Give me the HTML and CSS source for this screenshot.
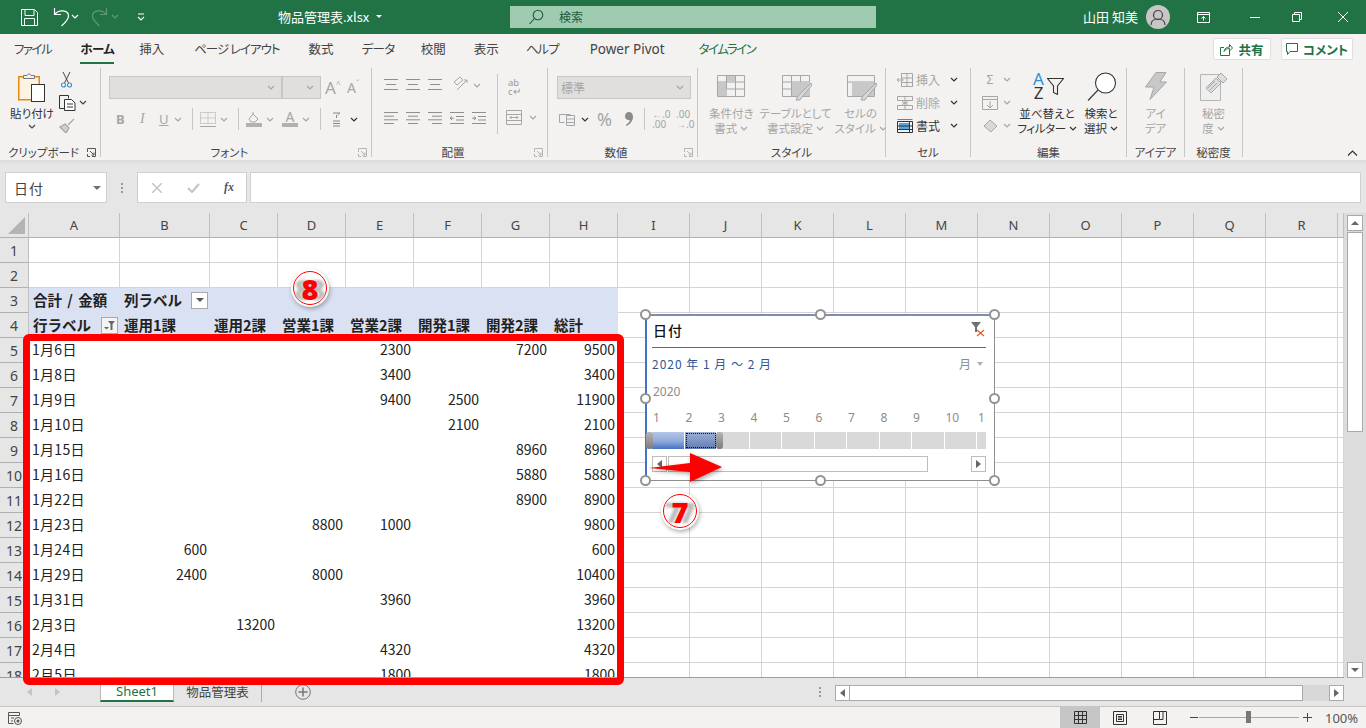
FILE: index.html
```html
<!DOCTYPE html>
<html lang="ja">
<head>
<meta charset="utf-8">
<title>物品管理表.xlsx - Excel</title>
<link rel="stylesheet" href="styles.css">
</head>
<body>
<svg class="defs" width="0" height="0" aria-hidden="true">
  <symbol id="cv" viewBox="0 0 8 5"><path d="M1 1l3 3 3-3" fill="none" stroke="currentColor" stroke-width="1.2"/></symbol>
  <symbol id="launch" viewBox="0 0 9 9"><path d="M.5 4V.5h8v8H5M3 3l4 4M7 4.5V7H4.5M.5 6v2.500H3" fill="none" stroke="currentColor"/></symbol>
</svg>

<header class="titlebar">
  <div class="qat">
    <svg class="q-save" width="17" height="17" viewBox="0 0 17 17"><path d="M.5.5h13l3 3v13H.5zM4 .5v6h9v-6M3.500 16.500v-7h10v7" fill="none" stroke="#fff"/></svg>
    <svg class="q-undo" width="19" height="20" viewBox="0 0 19 20"><path d="M3.500 1v6.500H10M3.500 7.500C8 2 17 3 17.500 8.500c.3 4-3 7-7 10.500" fill="none" stroke="#fff" stroke-width="1.200"/></svg>
    <svg class="q-cv" width="8" height="5"><use href="#cv"/></svg>
    <svg class="q-redo" width="19" height="20" viewBox="0 0 19 20"><path d="M15.500 1v6.500H9M15.500 7.500C11 2 2 3 1.500 8.500c-.3 4 3 7 7 10.500" fill="none" stroke="#5f9a7b" stroke-width="1.200"/></svg>
    <svg class="q-cv dim" width="8" height="5"><use href="#cv"/></svg>
    <svg class="q-more" width="8" height="8" viewBox="0 0 8 8"><path d="M1 1h6M1 4l3 3 3-3" fill="none" stroke="#fff" stroke-width="1.200"/></svg>
  </div>
  <div class="docname">物品管理表.xlsx<span class="caret-w"></span></div>
  <div class="search">
    <svg width="15" height="16" viewBox="0 0 15 16"><circle cx="9" cy="6" r="4.800" fill="none" stroke="#1f5a3a" stroke-width="1.100"/><path d="M5.500 9.500L.5 15" stroke="#1f5a3a" stroke-width="1.100"/></svg>
    <span>検索</span>
  </div>
  <div class="user">山田 知美</div>
  <div class="avatar"><svg width="16" height="17" viewBox="0 0 16 17"><circle cx="8" cy="6" r="4.500" fill="none" stroke="#444" stroke-width="1.200"/><path d="M1 16c0-4 3-6 7-6s7 2 7 6" fill="none" stroke="#444" stroke-width="1.200"/></svg></div>
  <div class="winbtns">
    <svg width="13" height="11" viewBox="0 0 13 11"><path d="M.5.500h12v10H.5zM.5 2.500h12M6.500 8.500V4.500M4.500 6.500l2-2 2 2" fill="none" stroke="#fff"/></svg>
    <svg width="10" height="1" viewBox="0 0 10 1"><path d="M0 .5h10" stroke="#fff"/></svg>
    <svg width="10" height="10" viewBox="0 0 10 10"><path d="M.5 2.500h7v7h-7zM2.500 2.500v-2h7v7h-2" fill="none" stroke="#fff"/></svg>
    <svg width="10" height="10" viewBox="0 0 10 10"><path d="M0 0l10 10M10 0L0 10" stroke="#fff"/></svg>
  </div>
</header>

<nav class="tabs">
  <span class="tab t-file">ファイル</span>
  <span class="tab t-home">ホーム</span>
  <span class="tab t-ins">挿入</span>
  <span class="tab t-page">ページ レイアウト</span>
  <span class="tab t-num">数式</span>
  <span class="tab t-data">データ</span>
  <span class="tab t-rev">校閲</span>
  <span class="tab t-view">表示</span>
  <span class="tab t-help">ヘルプ</span>
  <span class="tab t-pp">Power Pivot</span>
  <span class="tab t-tl">タイムライン</span>
  <span class="tab-space"></span>
  <button class="pill p-share"><svg width="13" height="13" viewBox="0 0 13 13"><path d="M9.500 8v4.500H.5v-8H4M4 8.500c.5-3 2.500-4.500 5.500-4.500V1.500l3 3.500-3 3V5.500C7 5.500 5 6.500 4 8.500z" fill="none" stroke="#217346"/></svg>共有</button>
  <button class="pill p-comment"><svg width="12" height="12" viewBox="0 0 12 12"><path d="M.5.5h11v8H4l-2.500 3v-3h-1z" fill="none" stroke="#217346"/></svg>コメント</button>
</nav>

<section class="ribbon">
  <div class="group g-clip">
    <div class="g-body">
      <div class="big b-paste">
        <div class="big-ic"><svg width="28" height="31" viewBox="0 0 28 31"><rect x=".75" y="4.750" width="20.500" height="23" fill="#fdf3e3" stroke="#e48a12" stroke-width="1.500"/><path d="M5.500 6.500h11V3.500h-3.500c-.3-2-3.700-2-4 0H5.500z" fill="#f3f2f1" stroke="#777"/><rect x="13.500" y="12.500" width="13" height="17" fill="#fff" stroke="#333"/></svg></div>
        <span>貼り付け</span>
        <svg class="cv-l" width="8" height="5"><use href="#cv"/></svg>
      </div>
      <div class="smallcol sc-clip">
        <div class="sm"><svg width="11" height="16" viewBox="0 0 11 16"><path d="M2 0l5.500 11M9 0L3.500 11" stroke="#444"/><circle cx="2.500" cy="13" r="2" fill="#fff" stroke="#2f8fd8" stroke-width="1.200"/><circle cx="8.500" cy="13" r="2" fill="#fff" stroke="#2f8fd8" stroke-width="1.200"/></svg></div>
        <div class="sm"><svg width="17" height="16" viewBox="0 0 17 16"><path d="M5.500 13.500H.5V.5h9v3" fill="none" stroke="#333"/><path d="M5.500 4.500h7l3.500 3.500v7.500H5.500zM8 9h6M8 12h6" fill="#fff" stroke="#333"/></svg><svg class="cv-g" width="8" height="5"><use href="#cv"/></svg></div>
        <div class="sm"><svg width="16" height="15" viewBox="0 0 16 15"><path d="M15 1L9 7M1 9l5-3 4 4-3 5-6-6z" fill="#d0d0d0" stroke="#a6a6a6" stroke-width="1.200"/></svg></div>
      </div>
    </div>
    <div class="g-label"><span>クリップボード</span><svg class="launch" width="9" height="9"><use href="#launch"/></svg></div>
  </div>
  <i class="gsep"></i>

  <div class="group g-font">
    <div class="g-body col">
      <div class="f-row1">
        <div class="combo c-fname"><svg width="8" height="5"><use href="#cv"/></svg></div>
        <div class="combo c-fsize"><svg width="8" height="5"><use href="#cv"/></svg></div>
        <span class="grow-a big-a">A<sup>^</sup></span>
        <span class="grow-a small-a">A<sup>ˇ</sup></span>
      </div>
      <div class="f-row2">
        <b class="t-b">B</b><i class="t-i">I</i><u class="t-u">U</u><svg class="d" width="8" height="5"><use href="#cv"/></svg>
        <i class="vl"></i>
        <svg width="16" height="15" viewBox="0 0 16 15"><path d="M.5.5h15v11H.5zM8 .5v11M.5 6h15" fill="none" stroke="#a6a6a6" stroke-dasharray="1 1"/><path d="M0 14.500h16" stroke="#a6a6a6"/></svg><svg class="d" width="8" height="5"><use href="#cv"/></svg>
        <i class="vl"></i>
        <svg width="16" height="16" viewBox="0 0 16 16"><path d="M3 8l4-5 5 5-3 3H5zM7 3V1" fill="none" stroke="#a6a6a6"/><path d="M0 12h16v4H0z" fill="#b3b0ad"/></svg><svg class="d" width="8" height="5"><use href="#cv"/></svg>
        <span class="colorA">A</span><svg class="d" width="8" height="5"><use href="#cv"/></svg>
        <i class="vl"></i>
        <svg class="ruby" width="9" height="15" viewBox="0 0 9 15"><path d="M1 1h7L5.500 3M4.500 3v3M1 9h7M1 11.500h7M1 14h7" fill="none" stroke="#888"/></svg><svg class="d dark" width="8" height="5"><use href="#cv"/></svg>
      </div>
    </div>
    <div class="g-label"><span>フォント</span><svg class="launch dim" width="9" height="9"><use href="#launch"/></svg></div>
  </div>
  <i class="gsep"></i>

  <div class="group g-align">
    <div class="g-body">
      <div class="a-main">
        <div class="a-row r1">
          <svg width="14" height="12" viewBox="0 0 14 12"><path d="M0 .5h14M2 5.500h10M0 10.500h14" stroke="#8f8f8f"/></svg>
          <svg width="14" height="12" viewBox="0 0 14 12"><path d="M0 .5h14M2 5.500h10M0 10.500h14" stroke="#8f8f8f"/></svg>
          <svg width="14" height="12" viewBox="0 0 14 12"><path d="M0 .5h14M2 5.500h10M0 10.500h14" stroke="#8f8f8f"/></svg>
          <svg width="17" height="16" viewBox="0 0 17 16"><path d="M2 6l6-5 3 3-6 5zM5 14L15 4M15 4h-3M15 4v3" fill="none" stroke="#a6a6a6"/></svg><svg class="d" width="8" height="5"><use href="#cv"/></svg>
        </div>
        <div class="a-row r2">
          <svg width="14" height="12" viewBox="0 0 14 12"><path d="M0 .5h14M0 4.200h10M0 7.800h14M0 11.500h10" stroke="#8f8f8f"/></svg>
          <svg width="14" height="12" viewBox="0 0 14 12"><path d="M0 .5h14M2 4.200h10M0 7.800h14M2 11.500h10" stroke="#8f8f8f"/></svg>
          <svg width="14" height="12" viewBox="0 0 14 12"><path d="M0 .5h14M4 4.200h10M0 7.800h14M4 11.500h10" stroke="#8f8f8f"/></svg>
          <svg width="14" height="12" viewBox="0 0 14 12"><path d="M0 .5h14M0 11.500h14M6 4.500h8M6 8h8M4 6.200H0M2 4.500L0 6.200 2 8" fill="none" stroke="#8f8f8f"/></svg>
          <svg width="14" height="12" viewBox="0 0 14 12"><path d="M0 .5h14M0 11.500h14M6 4.500h8M6 8h8M0 6.200h4M2 4.500l2 1.700L2 8" fill="none" stroke="#8f8f8f"/></svg>
        </div>
      </div>
      <i class="vl tall"></i>
      <div class="a-side">
        <div class="wrap-ic">ab<br>c↵</div>
        <div class="merge"><svg width="16" height="15" viewBox="0 0 16 15"><path d="M.5.5h15v14H.5zM.5 4.500h15M.5 10.500h15M4 7.500h8M5.500 6L4 7.500 5.500 9M10.500 6L12 7.500 10.500 9" fill="none" stroke="#a6a6a6"/></svg><svg class="d" width="8" height="5"><use href="#cv"/></svg></div>
      </div>
    </div>
    <div class="g-label"><span>配置</span><svg class="launch dim" width="9" height="9"><use href="#launch"/></svg></div>
  </div>
  <i class="gsep"></i>

  <div class="group g-num">
    <div class="g-body col">
      <div class="combo c-num"><span>標準</span><svg width="8" height="5"><use href="#cv"/></svg></div>
      <div class="n-row">
        <svg class="n-cur" width="17" height="14" viewBox="0 0 17 14"><path d="M11.500 2.500H.5v8h5M7.500 3.500h8v10h-8zM7.500 7h8M7.500 10.500h8" fill="none" stroke="#a6a6a6"/></svg><svg class="d dark" width="8" height="5"><use href="#cv"/></svg>
        <span class="pct">%</span>
        <svg class="comma" width="8" height="14" viewBox="0 0 8 14"><path d="M3.800 0C6.300 0 8 1.800 8 4.500 8 8.500 5.500 12 1.500 14l-.7-1C3 11.500 4.500 10 4.800 8 2 8.500 0 6.800 0 4.300 0 1.800 1.700 0 3.800 0z" fill="#8a8a8a"/></svg>
        <i class="vl"></i>
        <span class="dec">←.0<br>.00</span>
        <span class="dec d2">.00<br>→.0</span>
      </div>
    </div>
    <div class="g-label"><span>数値</span><svg class="launch dim" width="9" height="9"><use href="#launch"/></svg></div>
  </div>
  <i class="gsep"></i>

  <div class="group g-style">
    <div class="g-body">
      <div class="big dis b-cond">
        <div class="big-ic"><svg width="28" height="22" viewBox="0 0 28 22"><path d="M.5.5h27v21H.5zM.5 7h27M.5 14h27M9.500.5v21M18.500.5v21" fill="none" stroke="#a6a6a6"/><path d="M10 1h8v6h-8zM1 7h8v7H1zM18 14h-8v7H1v-7h8" fill="#c8c8c8"/></svg></div>
        <span>条件付き</span><span>書式<svg class="cv-i" width="8" height="5"><use href="#cv"/></svg></span>
      </div>
      <div class="big dis b-tbl">
        <div class="big-ic"><svg width="30" height="26" viewBox="0 0 30 26"><path d="M.5.500h27v21H.5zM.5 7h27M.5 14h27M9.500.5v21M18.500.5v21" fill="none" stroke="#a6a6a6"/><path d="M10 7h18v14H10z" fill="#c8c8c8"/><path d="M29 8L16 21l-2 4h4l2-3L30 10z" fill="#d8d8d8" stroke="#a6a6a6"/></svg></div>
        <span>テーブルとして</span><span>書式設定<svg class="cv-i" width="8" height="5"><use href="#cv"/></svg></span>
      </div>
      <div class="big dis b-cell">
        <div class="big-ic"><svg width="30" height="26" viewBox="0 0 30 26"><path d="M.5.500h27v21H.5zM.5 7h27" fill="none" stroke="#a6a6a6"/><path d="M5 7h22v14H5z" fill="#c8c8c8"/><path d="M29 8L16 21l-2 4h4l2-3L30 10z" fill="#d8d8d8" stroke="#a6a6a6"/></svg></div>
        <span>セルの</span><span>スタイル<svg class="cv-i" width="8" height="5"><use href="#cv"/></svg></span>
      </div>
    </div>
    <div class="g-label plain"><span>スタイル</span></div>
  </div>
  <i class="gsep"></i>

  <div class="group g-cell">
    <div class="g-body">
      <div class="smallcol sc-cell">
        <div class="sm dis"><svg width="16" height="14" viewBox="0 0 16 14"><path d="M4.500.5h11v13h-11zM4.500 5h11M4.500 9.500h11M10 .5v13M0 7h7M2 5L0 7l2 2" fill="none" stroke="#a6a6a6"/></svg><span>挿入</span><svg class="cv-d" width="8" height="5"><use href="#cv"/></svg></div>
        <div class="sm dis"><svg width="16" height="14" viewBox="0 0 16 14"><path d="M.5.5h15v4H.5zM.5 9.500h15v4H.5zM8 .5v13M5 5.500l6 3M11 5.500l-6 3" fill="none" stroke="#a6a6a6"/></svg><span>削除</span><svg class="cv-d" width="8" height="5"><use href="#cv"/></svg></div>
        <div class="sm on"><svg width="16" height="15" viewBox="0 0 16 15"><path d="M.5 1.500h15" stroke="#2f8fd8"/><path d="M2 5h10v7H2z" fill="#55a6e4"/><path d="M.5 3.500h15v11H.5zM.5 8h15M.5 11.500h15M12.500 3.500v11" fill="none" stroke="#333"/></svg><span>書式</span><svg class="cv-e" width="8" height="5"><use href="#cv"/></svg></div>
      </div>
    </div>
    <div class="g-label plain"><span>セル</span></div>
  </div>
  <i class="gsep"></i>

  <div class="group g-edit">
    <div class="g-body">
      <div class="smallcol sc-edit">
        <div class="sm dis"><span class="sigma">Σ</span><svg class="cv-d" width="8" height="5"><use href="#cv"/></svg></div>
        <div class="sm dis"><svg width="16" height="14" viewBox="0 0 16 14"><path d="M.5.500h15v13H.5zM.5 3.500h15M8 5v7M5 9l3 3 3-3" fill="none" stroke="#a6a6a6"/></svg><svg class="cv-d" width="8" height="5"><use href="#cv"/></svg></div>
        <div class="sm dis"><svg width="16" height="14" viewBox="0 0 16 14"><path d="M8 1l7 6-6 6-7-6z" fill="#d8d8d8" stroke="#a6a6a6"/></svg><svg class="cv-d" width="8" height="5"><use href="#cv"/></svg></div>
      </div>
      <div class="big b-sort">
        <div class="big-ic sort-ic"><div class="az"><span class="a-blue">A</span><span>Z</span></div><svg width="17" height="17" viewBox="0 0 17 17"><path d="M.5.500h16L10.500 8v8.500l-4-2V8z" fill="none" stroke="#333" stroke-width="1.100"/></svg></div>
        <span>並べ替えと</span><span class="tight">フィルター<svg class="cv-i" width="8" height="5"><use href="#cv"/></svg></span>
      </div>
      <div class="big b-find">
        <div class="big-ic"><svg width="30" height="29" viewBox="0 0 30 29"><circle cx="18.500" cy="11" r="10" fill="#fff" stroke="#333" stroke-width="1.100"/><path d="M11 18L1 28.500" stroke="#333" stroke-width="1.100"/></svg></div>
        <span>検索と</span><span>選択<svg class="cv-i" width="8" height="5"><use href="#cv"/></svg></span>
      </div>
    </div>
    <div class="g-label plain"><span>編集</span></div>
  </div>
  <i class="gsep"></i>

  <div class="group g-idea">
    <div class="g-body">
      <div class="big dis b-idea">
        <div class="big-ic"><svg width="22" height="28" viewBox="0 0 22 28"><path d="M11 .5h10L15 10h6.500L5 27.500 9 15H.5z" fill="#c8c8c8" stroke="#a6a6a6"/></svg></div>
        <span>アイ</span><span>デア</span>
      </div>
    </div>
    <div class="g-label plain"><span>アイデア</span></div>
  </div>
  <i class="gsep"></i>

  <div class="group g-sens">
    <div class="g-body">
      <div class="big dis b-sens">
        <div class="big-ic"><svg width="28" height="29" viewBox="0 0 28 29"><path d="M.5 2.500h20v26H.5z" fill="#efefef" stroke="#b5b5b5"/><path d="M6 16l10-10 5 5-10 10zM8 16l7-7M10 18l7-7M17 5l4-4 6 6-4 4z" fill="#ddd" stroke="#a6a6a6"/></svg></div>
        <span>秘密</span><span>度<svg class="cv-i" width="8" height="5"><use href="#cv"/></svg></span>
      </div>
    </div>
    <div class="g-label plain"><span>秘密度</span></div>
  </div>
  <i class="gsep"></i>
  <div class="collapse"><svg width="11" height="6" viewBox="0 0 11 6"><path d="M1 5.500l4.500-4.500 4.500 4.500" fill="none" stroke="#333" stroke-width="1.200"/></svg></div>
</section>
<div class="ribbon-shadow"></div>

<section class="formula">
  <div class="namebox"><span>日付</span><i class="tri-d"></i></div>
  <div class="fdots"></div>
  <div class="fbtns">
    <svg width="10" height="10" viewBox="0 0 10 10"><path d="M0 0l10 10M10 0L0 10" stroke="#c4c4c4" stroke-width="1.500"/></svg>
    <svg width="13" height="10" viewBox="0 0 13 10"><path d="M1 5l4 4 7-8" fill="none" stroke="#c4c4c4" stroke-width="2"/></svg>
    <span class="fx">fx</span>
  </div>
  <div class="finput"></div>
</section>

<main class="sheet-area">
  <div class="grid-wrap">
    <table class="sheet">
      <colgroup>
        <col class="c-rh"><col class="c-a"><col class="c-b">
        <col class="c-n"><col class="c-n"><col class="c-n"><col class="c-n"><col class="c-n"><col class="c-n">
        <col class="c-w"><col class="c-w"><col class="c-w"><col class="c-w"><col class="c-w"><col class="c-w"><col class="c-w"><col class="c-w"><col class="c-w"><col class="c-w"><col class="c-x">
      </colgroup>
      <thead>
        <tr><th class="corner"><i></i></th><th>A</th><th>B</th><th>C</th><th>D</th><th>E</th><th>F</th><th>G</th><th>H</th><th>I</th><th>J</th><th>K</th><th>L</th><th>M</th><th>N</th><th>O</th><th>P</th><th>Q</th><th>R</th><th></th></tr>
      </thead>
      <tbody id="rows"></tbody>
    </table>
  </div>
  <aside class="vscroll">
    <div class="sb-btn"><i class="tri-u"></i></div>
    <div class="v-thumb"></div>
    <div class="v-track"></div>
    <div class="sb-btn"><i class="tri-d2"></i></div>
  </aside>
</main>

<section class="sheetbar">
  <div class="nav-arrows"><i class="na-l"></i><i class="na-r"></i></div>
  <div class="stab active">Sheet1</div>
  <div class="stab">物品管理表</div>
  <div class="addsheet"><svg width="16" height="16" viewBox="0 0 16 16"><circle cx="8" cy="8" r="7.300" fill="none" stroke="#777"/><path d="M8 3.500v9M3.500 8h9" stroke="#777" stroke-width="1.500"/></svg></div>
  <div class="hdots"></div>
  <div class="hscroll">
    <div class="hb"><i class="na-l dark"></i></div>
    <div class="h-thumb"></div>
    <div class="h-track"></div>
    <div class="hb"><i class="na-r dark"></i></div>
  </div>
</section>

<footer class="status">
  <svg class="macro" width="14" height="14" viewBox="0 0 14 14"><path d="M.5 1.500h11v3H.5zM.5 4.500v8h5M3 7h3M3 10h2" fill="none" stroke="#555"/><circle cx="10" cy="10" r="3.500" fill="none" stroke="#555"/><circle cx="10" cy="10" r="1.500" fill="#555"/></svg>
  <div class="viewbtn active"><svg width="13" height="13" viewBox="0 0 13 13"><path d="M.5.500h12v12H.5zM4.500.5v12M8.500.5v12M.5 4.500h12M.5 8.500h12" fill="none" stroke="#333"/></svg></div>
  <div class="viewbtn"><svg width="14" height="14" viewBox="0 0 14 14"><path d="M.5.500h13v13H.5zM3.500 3.500h7v7h-7zM5 5.500h4M5 7h4M5 8.500h4" fill="none" stroke="#333"/></svg></div>
  <div class="viewbtn"><svg width="14" height="14" viewBox="0 0 14 14"><path d="M.5.500h13v13H.5zM.5 8.500h6V.5M7 8.500h3V.5" fill="none" stroke="#333"/></svg></div>
  <div class="zoom-minus"></div>
  <div class="zoom-track"><i></i></div>
  <div class="zoom-plus"></div>
  <div class="zoom-val">100%</div>
</footer>

<div class="slicer">
  <i class="h h1"></i><i class="h h2"></i><i class="h h3"></i><i class="h h4"></i><i class="h h5"></i><i class="h h6"></i><i class="h h7"></i><i class="h h8"></i>
  <div class="sl-head"><span>日付</span>
    <svg width="15" height="15" viewBox="0 0 15 15"><path d="M0 0h10L6 5v5H4V5z" fill="#707070"/><path d="M6 8l7 6M13 8l-7 6" stroke="#e8572f" stroke-width="1.200"/></svg>
  </div>
  <div class="sl-range"><span class="sl-rtext">2020 年 1 月 ～ 2 月</span><span class="sl-unit">月<i class="tri-s"></i></span></div>
  <div class="sl-year">2020</div>
  <div class="sl-months" id="months"></div>
  <div class="sl-bar" id="bar"></div>
  <div class="sl-scroll">
    <div class="sl-b"><i class="na-l dark"></i></div>
    <div class="sl-thumb"></div>
    <div class="sl-gap"></div>
    <div class="sl-b"><i class="na-r dark"></i></div>
  </div>
</div>

<div class="redbox"></div>
<svg class="arrow" width="82" height="38" viewBox="0 0 82 38"><path d="M1 16l41-5V1l32 14L42 30V20z" fill="#f00"/></svg>
<div class="badge b8"><span>8</span></div>
<div class="badge b7"><span>7</span></div>
<script src="app.js"></script>
</body>
</html>
```
FILE: app.js
```js
var cols = 19;
var data = [
  ['1月6日',{5:2300,7:7200,8:9500}],
  ['1月8日',{5:3400,8:3400}],
  ['1月9日',{5:9400,6:2500,8:11900}],
  ['1月10日',{6:2100,8:2100}],
  ['1月15日',{7:8960,8:8960}],
  ['1月16日',{7:5880,8:5880}],
  ['1月22日',{7:8900,8:8900}],
  ['1月23日',{4:8800,5:1000,8:9800}],
  ['1月24日',{2:600,8:600}],
  ['1月29日',{2:2400,4:8000,8:10400}],
  ['1月31日',{5:3960,8:3960}],
  ['2月3日',{3:13200,8:13200}],
  ['2月4日',{5:4320,8:4320}],
  ['2月5日',{5:1800,8:1800}]
];
var heads = {2:'運用1課',3:'運用2課',4:'営業1課',5:'営業2課',6:'開発1課',7:'開発2課',8:'総計'};
var fbtn = '<i class="pv-btn"><b class="pv-tri"></b></i>';
var funnel = '<i class="pv-btn flt"><svg width="11" height="9" viewBox="0 0 11 9"><path d="M4 0h7L8.500 3v6h-2V3z" fill="#666"/><path d="M0 6h5L2.500 8.500z" fill="#666"/></svg></i>';
var h = '';
function rest(from){ var s=''; for(var c=from;c<=cols;c++){ s+='<td></td>'; } return s; }
for (var r=1;r<=24;r++){
  h += '<tr><th class="rh">'+(r<=23?r:'')+'</th>';
  if (r===3){
    h += '<td class="pvh"><div class="pv wide">合計 / 金額</div></td><td class="pvh"><div class="pv sb">列ラベル'+fbtn+'</div></td>';
    for(var c=3;c<=8;c++){ h+='<td class="pvh"></td>'; }
    h += rest(9);
  } else if (r===4){
    h += '<td class="pvh"><div class="pv sb">行ラベル'+funnel+'</div></td>';
    for(var d=2;d<=8;d++){ h+='<td class="pvh"><div class="pv">'+heads[d]+'</div></td>'; }
    h += rest(9);
  } else if (r>=5 && r<=18){
    var row = data[r-5];
    h += '<td class="dl">'+row[0]+'</td>';
    for(var e=2;e<=8;e++){ h+='<td class="dn">'+(row[1][e]||'')+'</td>'; }
    h += rest(9);
  } else {
    h += rest(1);
  }
  h += '</tr>';
}
document.getElementById('rows').innerHTML = h;

var ml = ['1','2','3','4','5','6','7','8','9','10','1'], mh='', bh='';
for (var i=0;i<ml.length;i++){
  mh += '<span>'+ml[i]+'</span>';
  bh += '<i class="'+(i===0?'s1':i===1?'s2':'')+'"></i>';
}
document.getElementById('months').innerHTML = mh;
document.getElementById('bar').innerHTML = bh;
```
FILE: styles.css
```css
* { box-sizing: border-box; }
html, body { margin: 0; padding: 0; }
body {
  position: relative;
  width: 1366px;
  height: 728px;
  overflow: hidden;
  background: #e6e6e6;
  font-family: "Noto Sans CJK JP", "Noto Sans", sans-serif;
  color: #444;
  font-size: 12px;
}
svg { display: block; flex: none; }
.defs { position: absolute; }
sup { line-height: 0; }

/* title bar */
.titlebar { display: flex; align-items: center; height: 34px; background: #217346; color: #fff; }
.qat { display: flex; align-items: center; width: 278px; padding-left: 21px; }
.q-undo { margin-left: 13px; }
.q-cv { margin-left: 1px; margin-top: -1px; color: #fff; }
.q-cv.dim { color: #5f9a7b; }
.q-redo { margin-left: 12px; }
.q-more { margin-left: 18px; }
.docname { display: flex; align-items: center; width: 232px; font-size: 13px; font-feature-settings: "palt"; margin-top: -2px; }
.caret-w { margin-left: 7px; border: 3.5px solid transparent; border-top: 3.5px solid #fff; border-bottom: 0; }
.search { display: flex; align-items: center; width: 366px; height: 22px; padding-left: 19px; background: #9fcbb1; color: #1c5a38; }
.search span { margin-left: 15px; margin-top: -2px; font-size: 12px; }
.user { margin-left: 207px; width: 57px; font-size: 13px; margin-top: -2px; }
.avatar { display: flex; align-items: center; justify-content: center; width: 24px; height: 24px; margin-left: 6px; border-radius: 50%; background: #c8c6c4; }
.winbtns { display: flex; align-items: center; margin-left: 27px; }
.winbtns svg:nth-child(2) { margin-left: 40px; }
.winbtns svg:nth-child(3) { margin-left: 32px; }
.winbtns svg:nth-child(4) { margin-left: 36px; }

/* tabs */
.tabs { display: flex; align-items: center; height: 31px; padding-left: 14px; background: #f3f2f1; font-size: 12.5px; color: #444; font-feature-settings: "palt"; }
.tab { position: relative; white-space: nowrap; line-height: 20px; margin-top: -1px; }
.t-file { letter-spacing: -1.5px; }
.t-home { margin-left: 29px; font-weight: 700; color: #222; letter-spacing: -.6px; }
.t-home::after { content: ""; position: absolute; left: 0; right: 0; bottom: -5px; height: 2px; background: #217346; }
.t-ins { margin-left: 25px; }
.t-page { margin-left: 30px; letter-spacing: -1px; }
.t-num { margin-left: 29px; }
.t-data { margin-left: 28px; letter-spacing: -.6px; }
.t-rev { margin-left: 26px; }
.t-view { margin-left: 28px; }
.t-help { margin-left: 27px; letter-spacing: -1px; }
.t-pp { margin-left: 31px; font-family: "Noto Sans", sans-serif; font-size: 13.500px; }
.t-tl { margin-left: 34px; color: #217346; letter-spacing: -1.5px; }
.tab-space { flex: 1; }
.pill { display: flex; align-items: center; justify-content: center; gap: 5px; height: 22px; padding: 0; background: #fff; border: 1px solid #e1dfdd; border-radius: 2px; color: #217346; font: 700 12.5px "Noto Sans CJK JP", sans-serif; font-feature-settings: "palt"; margin-top: -1px; }
.p-share { width: 58px; }
.p-comment { width: 72px; margin-left: 10px; margin-right: 13px; }

/* ribbon */
.ribbon { display: flex; align-items: flex-start; height: 95px; padding-top: 3px; background: #f3f2f1; }
.ribbon-shadow { height: 5px; background: linear-gradient(#dcdcdc, #e6e6e6); }
.group { display: flex; flex-direction: column; height: 92px; flex: none; }
.gsep { flex: none; width: 1px; height: 89px; background: #c8c6c4; }
.g-body { display: flex; height: 76px; }
.g-body.col { flex-direction: column; }
.g-label { display: flex; align-items: center; height: 16px; line-height: 16px; font-size: 11.5px; font-feature-settings: "palt"; color: #444; padding-right: 4px; }
.g-label span { flex: 1; text-align: center; white-space: nowrap; }
.g-label.plain { padding-right: 0; }
.launch { color: #555; }
.launch.dim { color: #b5b5b5; }
.g-clip { width: 100px; }
.g-font { width: 270px; }
.g-align { width: 175px; }
.g-num { width: 149px; }
.g-style { width: 187px; }
.g-cell { width: 84px; }
.g-edit { width: 155px; }
.g-idea { width: 57px; }
.g-sens { width: 57px; }

.big { display: flex; flex-direction: column; align-items: center; padding-top: 4px; font-size: 11.5px; line-height: 15px; color: #333; font-feature-settings: "palt"; white-space: nowrap; }
.big > span { display: flex; align-items: center; }
.big-ic { height: 34px; }
.big.dis { color: #a6a6a6; }
.tight { letter-spacing: -.4px; }
.cv-l { margin-top: 3px; color: #444; }
.cv-i { margin-left: 3px; }
.b-paste { width: 54px; margin-left: 5px; }
.smallcol { display: flex; flex-direction: column; }
.sm { display: flex; align-items: center; height: 23px; }
.sm.dis { color: #a6a6a6; }
.sm span { font-size: 12px; font-feature-settings: "palt"; }
.sm.on { color: #333; }
.sc-clip .sm { width: 30px; }
.sc-clip .sm:nth-child(1) { padding-left: 2px; }
.cv-g { margin-left: 3px; color: #444; }

/* font group */
.f-row1 { display: flex; align-items: center; height: 23px; margin-top: 8px; padding-left: 8px; }
.combo { display: flex; align-items: center; justify-content: flex-end; height: 23px; padding-right: 6px; background: #e1dfdd; border: 1px solid #c8c6c4; color: #a6a6a6; }
.c-fname { width: 173px; }
.c-fsize { width: 39px; }
.grow-a { color: #a6a6a6; line-height: 20px; font-family: "Noto Sans", sans-serif; }
.big-a { margin-left: 4px; font-size: 17px; width: 22px; }
.small-a { font-size: 14px; width: 16px; }
.grow-a sup { font-size: 8px; }
.f-row2 { display: flex; align-items: center; height: 22px; margin-top: 9px; padding-left: 15px; color: #a6a6a6; }
.f-row2 b { width: 13px; font: 700 13px "Noto Sans", sans-serif; }
.f-row2 i.t-i { margin-left: 11px; width: 10px; font: italic 14px "Liberation Serif", serif; }
.f-row2 u { margin-left: 9px; width: 11px; font: 13px "Noto Sans", sans-serif; }
.d { margin-left: 4px; color: #a6a6a6; }
.d.dark { color: #333; }
.vl { display: block; flex: none; width: 1px; height: 22px; margin: 0 7px 0 10px; background: #c8c6c4; }
.colorA { margin-left: 8px; width: 16px; height: 16px; text-align: center; font: 14px/12px "Noto Sans", sans-serif; border-bottom: 4px solid #b3b0ad; }
.ruby { margin-left: 4px; }
.f-row2 .ruby + .d { margin-left: 9px; }

/* alignment */
.a-main { width: 125px; padding-left: 12px; }
.a-row { display: flex; align-items: center; gap: 8px; }
.a-row.r1 { height: 18px; margin-top: 8px; }
.a-row.r2 { height: 18px; margin-top: 15px; }
.a-row.r1 svg:nth-child(4) { margin-left: 2px; margin-top: -2px; }
.a-row.r1 .d { margin-left: -4px; }
.vl.tall { height: 60px; margin: 6px 0 0 0; }
.a-side { display: flex; flex-direction: column; padding-left: 8px; }
.wrap-ic { height: 32px; margin-top: 10px; padding-left: 2px; font: 9.500px/9px "Noto Sans", sans-serif; color: #999; }
.merge { display: flex; align-items: center; }
.merge .d { margin-left: 7px; }

/* number */
.c-num { width: 134px; margin: 8px 0 0 9px; justify-content: space-between; padding-left: 3px; color: #a6a6a6; font-size: 12px; }
.n-row { display: flex; align-items: center; height: 24px; margin-top: 8px; padding-left: 11px; color: #a6a6a6; }
.n-row .d { margin-left: 5px; }
.pct { margin-left: 8px; font: 18px "Noto Sans", sans-serif; width: 17px; }
.comma { margin-left: 12px; }
.n-row .vl { margin: 0 7px 0 11px; }
.dec { font: 10px/10px "Noto Sans", sans-serif; width: 22px; white-space: nowrap; }
.d2 { margin-left: 3px; }

/* style */
.b-cond { margin-left: 11px; width: 50px; }
.b-tbl { margin-left: 7px; width: 70px; }
.b-cell { margin-left: 5px; width: 50px; }
.b-cond .big-ic { padding-top: 3px; }
.b-tbl .big-ic, .b-cell .big-ic { padding-top: 3px; padding-left: 2px; }

/* cells */
.sc-cell { padding-left: 11px; }
.sc-cell .sm span { margin-left: 3px; width: 26px; }
.cv-d { margin-left: 8px; color: #777; }
.cv-e { margin-left: 8px; color: #333; }
.sc-cell .sm.dis .cv-d { color: #333; }

/* editing */
.sc-edit { width: 47px; padding-left: 11px; }
.sc-edit .cv-d { margin-left: 5px; color: #a6a6a6; }
.sigma { width: 16px; text-align: center; font: 18px/20px "Noto Sans", sans-serif; }
.b-sort { width: 60px; margin-left: -1px; }
.b-find { width: 46px; margin-left: 1px; }
.b-sort .big-ic, .b-find .big-ic { margin-left: 2px; }
.sort-ic { display: flex; align-items: center; gap: 2px; padding-bottom: 6px; }
.az { display: flex; flex-direction: column; width: 12px; font: 17px/14px "Noto Sans", sans-serif; color: #333; }
.az span { display: block; height: 14px; text-align: center; }
.az .a-blue { color: #2f8fd8; }
.b-idea { width: 57px; }
.b-sens { width: 57px; }

.collapse { flex: 1; display: flex; justify-content: flex-end; padding: 82px 8px 0 0; }

/* formula bar */
.formula { display: flex; align-items: flex-start; height: 48px; padding: 7px 5px 0; }
.namebox { display: flex; align-items: center; justify-content: space-between; width: 102px; height: 31px; padding: 0 5px 0 8px; background: #fff; border: 1px solid #d0d0d0; font-size: 14px; letter-spacing: 1px; color: #444; }
.tri-d { border: 4px solid transparent; border-top: 4px solid #707070; border-bottom: 0; }
.fdots { width: 2px; height: 10px; margin: 11px 14px 0 14px; background: repeating-linear-gradient(#999 0 2px, transparent 2px 4px); }
.fbtns { display: flex; align-items: center; justify-content: space-between; width: 110px; height: 31px; padding: 0 12px 0 14px; background: #fff; border: 1px solid #d0d0d0; }
.fx { font: italic 700 12px "Liberation Serif", serif; color: #555; }
.finput { width: 1111px; height: 31px; margin-left: 3px; background: #fff; border: 1px solid #d0d0d0; }

/* sheet */
.sheet-area { display: flex; height: 465px; }
.grid-wrap { width: 1344px; height: 465px; overflow: hidden; background: #fff; border-bottom: 1px solid #9e9e9e; }
.sheet { width: 1344px; table-layout: fixed; border-collapse: separate; border-spacing: 0; font-size: 14px; color: #222; }
.c-rh { width: 29px; } .c-a { width: 91px; } .c-b { width: 90px; } .c-n { width: 68px; } .c-w { width: 72px; } .c-x { width: 6px; }
.sheet th { height: 25px; padding: 0; background: #e6e6e6; color: #444; font-weight: 400; border-right: 1px solid #c0c0c0; border-bottom: 1px solid #b0b0b0; text-align: center; }
.sheet thead th { font-family: "Noto Sans", sans-serif; font-size: 13px; }
.sheet th.rh { font-family: "Noto Sans", sans-serif; font-size: 14px; }
.corner { position: relative; }
.corner i { position: absolute; right: 3px; bottom: 3px; border-style: solid; border-width: 0 0 17px 17px; border-color: transparent transparent #b4b4b4 transparent; }
.sheet td { height: 25px; padding: 0; border-right: 1px solid #d4d4d4; border-bottom: 1px solid #d4d4d4; white-space: nowrap; overflow: hidden; line-height: 24px; }
.sheet td.pvh { background: #d9e1f2; border-color: #d9e1f2; font-weight: 700; font-size: 14.500px; color: #222; }
.pv { display: flex; align-items: center; height: 24px; padding-left: 4px; }
.pv.wide { word-spacing: 2px; margin-top: -1px; }
.pv.sb { justify-content: space-between; padding-right: 1px; }
.pv-btn { display: flex; align-items: center; justify-content: center; width: 17px; height: 17px; background: #fff; border: 1px solid #a8a8a8; }
.pv-tri { border: 4px solid transparent; border-top: 4px solid #555; border-bottom: 0; }
.flt { background: #f4f4f4; }
.sheet td.dl, .sheet td.dn { border-color: transparent; line-height: 22px; padding-bottom: 2px; }
.sheet td.dl { padding-left: 3px; letter-spacing: .3px; }
.sheet td.dn { padding-right: 2px; text-align: right; }

.vscroll { display: flex; flex-direction: column; align-items: center; width: 22px; background: #dcdcdc; padding-top: 2px; }
.sb-btn { display: flex; align-items: center; justify-content: center; width: 16px; height: 16px; flex: none; background: #fff; border: 1px solid #aaa; }
.tri-u { border: 4px solid transparent; border-bottom: 4px solid #666; border-top: 0; }
.tri-d2 { border: 4px solid transparent; border-top: 4px solid #666; border-bottom: 0; }
.v-thumb { width: 16px; height: 200px; margin-top: 1px; background: #fff; border: 1px solid #aaa; flex: none; }
.v-track { flex: 1; }

/* sheet bar */
.sheetbar { display: flex; align-items: flex-start; height: 28px; background: #e6e6e6; }
.nav-arrows { display: flex; align-items: center; gap: 23px; width: 100px; height: 28px; padding-left: 27px; }
.na-l { display: block; border: 4px solid transparent; border-right: 5px solid #c4c4c4; border-left: 0; }
.na-r { display: block; border: 4px solid transparent; border-left: 5px solid #c4c4c4; border-right: 0; }
.na-l.dark { border-right-color: #666; }
.na-r.dark { border-left-color: #666; }
.stab { display: flex; align-items: center; justify-content: center; height: 24px; font-size: 12.500px; color: #444; padding-top: 2px; }
.stab.active { width: 74px; background: #fff; color: #217346; border-left: 1px solid #bbb; border-right: 1px solid #bbb; border-bottom: 2px solid #217346; font-family: "Noto Sans", sans-serif; font-size: 13px; padding-top: 4px; }
.stab:not(.active) { width: 88px; border-right: 1px solid #aaa; }
.addsheet { margin: 6px 0 0 33px; }
.hdots { width: 2px; height: 10px; margin: 9px 0 0 508px; background: repeating-linear-gradient(#999 0 2px, transparent 2px 4px); }
.hscroll { display: flex; width: 509px; height: 16px; margin: 7px 0 0 14px; }
.hb { display: flex; align-items: center; justify-content: center; width: 15px; height: 16px; background: #fff; border: 1px solid #aaa; }
.h-thumb { width: 453px; background: #fff; border: 1px solid #aaa; border-left: 0; }
.h-track { flex: 1; background: #d8d8d8; }

/* status */
.status { display: flex; align-items: center; height: 22px; background: #f3f2f1; border-top: 1px solid #c8c6c4; }
.macro { margin-left: 8px; }
.viewbtn { display: flex; align-items: center; justify-content: center; width: 40px; height: 21px; }
.viewbtn.active { margin-left: 1038px; background: #c6c6c6; }
.zoom-minus { width: 8px; height: 1px; margin-left: 10px; background: #444; }
.zoom-track { position: relative; width: 100px; height: 1px; margin-left: 1px; background: #a6a6a6; }
.zoom-track i { position: absolute; left: 47px; top: -6px; width: 5px; height: 12px; background: #777; }
.zoom-plus { position: relative; width: 9px; height: 1px; margin-left: 4px; background: #444; }
.zoom-plus::after { content: ""; position: absolute; left: 4px; top: -4px; width: 1px; height: 9px; background: #444; }
.zoom-val { margin-left: 13px; font: 13px "Noto Sans", sans-serif; color: #555; }

/* slicer */
.slicer { position: absolute; left: 645px; top: 314px; width: 350px; height: 167px; padding: 0 8px 0 5px; background: #fff; border: 1px solid #8f8f8f; border-top: 2px solid #7f8ea8; border-left: 2px solid #4472c4; }
.h { position: absolute; width: 11px; height: 11px; background: #fff; border: 2px solid #939393; border-radius: 50%; }
.h1 { left: -7px; top: -7px; } .h2 { left: 168px; top: -7px; } .h3 { right: -6px; top: -7px; }
.h4 { left: -7px; top: 77px; } .h5 { right: -6px; top: 77px; }
.h6 { left: -7px; bottom: -6px; } .h7 { left: 168px; bottom: -6px; } .h8 { right: -6px; bottom: -6px; }
.sl-head { display: flex; align-items: center; justify-content: space-between; height: 32px; padding: 0 0 4px 1px; border-bottom: 1px solid #4a6eaa; font-size: 14px; font-weight: 500; color: #111; letter-spacing: 1px; }
.sl-range { display: flex; align-items: center; justify-content: space-between; height: 30px; font-size: 12px; color: #2f5597; padding-right: 3px; }
.sl-rtext { letter-spacing: 1px; }
.sl-unit { display: flex; align-items: center; gap: 6px; color: #8c8c8c; }
.tri-s { border: 3.500px solid transparent; border-top: 4px solid #b0b0b0; border-bottom: 0; margin-top: 2px; }
.sl-year { height: 28px; padding-left: 1px; line-height: 28px; font-family: "Noto Sans", sans-serif; font-size: 12px; color: #8c8c8c; }
.sl-months { display: flex; height: 26px; line-height: 24px; font-family: "Noto Sans", sans-serif; font-size: 12px; color: #8c8c8c; }
.sl-months span { flex: none; width: 32.500px; padding-left: 1px; }
.sl-months span:last-child { width: 10px; }
.sl-bar { display: flex; height: 17px; overflow: visible; }
.sl-bar i { flex: none; width: 32.500px; background: #d9d9d9; border-right: 1px solid #fff; position: relative; }
.sl-bar i:last-child { width: 9px; border-right: 0; }
.sl-bar i.s1 { background: linear-gradient(#b4c6e7, #8faadc 55%, #4472c4); }
.sl-bar i.s2 { z-index: 1; background: linear-gradient(#9fb0d4, #5f7bb4); outline: 1px dotted #111; outline-offset: -2px; }
.sl-bar i.s1::before, .sl-bar i.s2::after { content: ""; position: absolute; top: 0; bottom: 0; width: 7px; background: linear-gradient(#b5b5b5, #7c7c7c); border-radius: 3px; }
.sl-bar i.s1::before { left: -6px; }
.sl-bar i.s2::after { right: -7px; }
.sl-scroll { display: flex; height: 16px; margin-top: 7px; }
.sl-b { display: flex; align-items: center; justify-content: center; width: 15px; height: 16px; border: 1px solid #bdbdbd; }
.sl-thumb { width: 261px; margin-left: 1px; border: 1px solid #bdbdbd; }
.sl-gap { width: 43px; }

/* annotations */
.redbox { position: absolute; left: 23px; top: 334px; width: 601px; height: 351px; border: 7px solid #f00; border-radius: 6px; pointer-events: none; }
.arrow { position: absolute; left: 648px; top: 452px; filter: drop-shadow(1px 2px 2px rgba(0,0,0,.35)); }
.badge { position: absolute; display: flex; align-items: center; justify-content: center; width: 38px; height: 38px; border-radius: 50%; background: #fff; box-shadow: 1px 2px 4px rgba(0,0,0,.3); }
.badge::before { content: ""; position: absolute; inset: 2px; border: 1px solid #f00; border-radius: 50%; }
.badge span { position: relative; font: 900 29px/1 "Noto Sans", sans-serif; color: #f00; text-shadow: -7px 0 3px #bbb, 7px 0 3px #bbb; }
.b8 { left: 291px; top: 269px; }
.b7 { left: 661px; top: 492px; }
```
